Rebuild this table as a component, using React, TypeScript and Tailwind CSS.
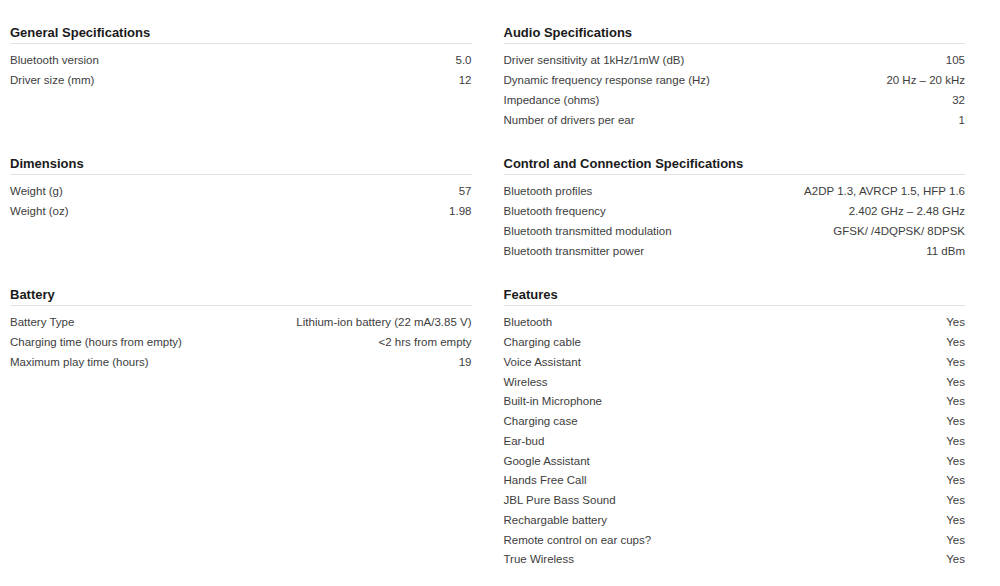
const sections: { title: string; rows: [string, string][] }[] = [
  {
    title: 'General Specifications',
    rows: [
      ['Bluetooth version', '5.0'],
      ['Driver size (mm)', '12'],
    ],
  },
  {
    title: 'Audio Specifications',
    rows: [
      ['Driver sensitivity at 1kHz/1mW (dB)', '105'],
      ['Dynamic frequency response range (Hz)', '20 Hz – 20 kHz'],
      ['Impedance (ohms)', '32'],
      ['Number of drivers per ear', '1'],
    ],
  },
  {
    title: 'Dimensions',
    rows: [
      ['Weight (g)', '57'],
      ['Weight (oz)', '1.98'],
    ],
  },
  {
    title: 'Control and Connection Specifications',
    rows: [
      ['Bluetooth profiles', 'A2DP 1.3, AVRCP 1.5, HFP 1.6'],
      ['Bluetooth frequency', '2.402 GHz – 2.48 GHz'],
      ['Bluetooth transmitted modulation', 'GFSK/ /4DQPSK/ 8DPSK'],
      ['Bluetooth transmitter power', '11 dBm'],
    ],
  },
  {
    title: 'Battery',
    rows: [
      ['Battery Type', 'Lithium-ion battery (22 mA/3.85 V)'],
      ['Charging time (hours from empty)', '<2 hrs from empty'],
      ['Maximum play time (hours)', '19'],
    ],
  },
  {
    title: 'Features',
    rows: [
      ['Bluetooth', 'Yes'],
      ['Charging cable', 'Yes'],
      ['Voice Assistant', 'Yes'],
      ['Wireless', 'Yes'],
      ['Built-in Microphone', 'Yes'],
      ['Charging case', 'Yes'],
      ['Ear-bud', 'Yes'],
      ['Google Assistant', 'Yes'],
      ['Hands Free Call', 'Yes'],
      ['JBL Pure Bass Sound', 'Yes'],
      ['Rechargable battery', 'Yes'],
      ['Remote control on ear cups?', 'Yes'],
      ['True Wireless', 'Yes'],
    ],
  },
];

export default function App() {
  return (
    <div className="w-[1000px] h-[586px] bg-white font-['Liberation_Sans',Arial,sans-serif] pt-[25px] pl-[10px]">
      <div className="w-[955px] grid grid-cols-2 gap-x-[32px] gap-y-[26px] items-start">
        {sections.map((section) => (
          <div key={section.title} className="flex flex-col">
            {/* Section heading */}
            <h3 className="text-[13px] leading-[16px] font-bold text-[#1a1a1a] pb-[2px] border-b border-[#e3e3e3]">
              {section.title}
            </h3>
            <div className="mt-[7px] flex flex-col">
              {section.rows.map(([label, value]) => (
                <div
                  key={label}
                  className="h-[19.75px] flex items-center justify-between text-[11.5px] text-[#3d3d3d]"
                >
                  <span>{label}</span>
                  <span>{value}</span>
                </div>
              ))}
            </div>
          </div>
        ))}
      </div>
    </div>
  );
}
